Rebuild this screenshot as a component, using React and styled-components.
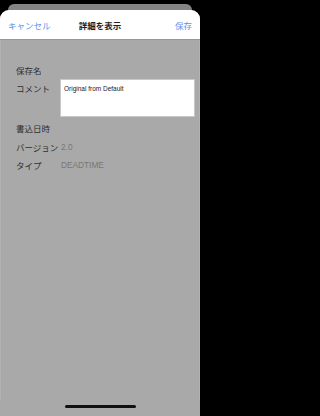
import React from "react";
import styled, { createGlobalStyle } from "styled-components";

const GlobalStyle = createGlobalStyle`
  * {
    box-sizing: border-box;
    margin: 0;
    padding: 0;
  }
  body {
    background: #000;
    font-family: "Noto Sans CJK JP", "Noto Sans", sans-serif;
  }
`;

const Page = styled.div`
  display: flex;
  flex-direction: column;
  width: 200px;
  height: 416px;
  background: #000;
`;

const BackCard = styled.div`
  margin: 4px 8px 0;
  height: 6px;
  background: #858585;
  border-radius: 8px 8px 0 0;
`;

const Sheet = styled.div`
  flex: 1;
  display: flex;
  flex-direction: column;
  border-radius: 9px 9px 0 0;
  overflow: hidden;
  background: #a9a9a9;
`;

const Header = styled.div`
  height: 30px;
  display: grid;
  grid-template-columns: 1fr auto 1fr;
  align-items: center;
  padding: 0 8px;
  background: #fff;
  border-bottom: 1px solid #979797;
`;

const NavButton = styled.span`
  font-size: 8.5px;
  color: #5b93ee;
  justify-self: ${(p) => (p.right ? "end" : "start")};
`;

const Title = styled.span`
  font-size: 8.5px;
  font-weight: 600;
  color: #1e1e1e;
`;

const Content = styled.div`
  flex: 1;
  padding: 21px 4px 0 15px;
  border-left: 1px solid #b3b3b3;
  border-right: 1px solid #b3b3b3;
  display: flex;
  flex-direction: column;
`;

const Row = styled.div`
  display: flex;
  align-items: flex-start;
  height: ${(p) => p.h || 18.5}px;
  margin-bottom: ${(p) => p.gap || 0}px;
`;

const Label = styled.div`
  width: 44px;
  flex-shrink: 0;
  font-size: 8.5px;
  line-height: 18px;
  color: #2f2f2f;
  white-space: nowrap;
`;

const Value = styled.div`
  font-family: "Liberation Sans", Arial, sans-serif;
  font-size: 8.3px;
  line-height: 18px;
  color: #777;
  padding-left: 1px;
`;

const Comment = styled.div`
  width: 135px;
  height: 38px;
  background: #fff;
  border: 1px solid #c8c8c8;
  padding: 5px 3px;
  font-family: "Liberation Sans", Arial, sans-serif;
  font-size: 6.5px;
  line-height: 8px;
  color: #222;
`;

const Footer = styled.div`
  height: 16px;
  display: flex;
  justify-content: center;
  align-items: flex-start;
  padding-top: 5px;
`;

const HomeBar = styled.div`
  width: 71px;
  height: 2.5px;
  border-radius: 2px;
  background: #111;
`;

export default function App() {
  return (
    <Page>
      <GlobalStyle />
      <BackCard />
      <Sheet>
        <Header>
          <NavButton>キャンセル</NavButton>
          <Title>詳細を表示</Title>
          <NavButton right>保存</NavButton>
        </Header>
        <Content>
          <Row h={18}>
            <Label>保存名</Label>
          </Row>
          <Row h={38} gap={2}>
            <Label>コメント</Label>
            <Comment>Original from Default</Comment>
          </Row>
          <Row>
            <Label>書込日時</Label>
          </Row>
          <Row>
            <Label>バージョン</Label>
            <Value>2.0</Value>
          </Row>
          <Row>
            <Label>タイプ</Label>
            <Value>DEADTIME</Value>
          </Row>
        </Content>
        <Footer>
          <HomeBar />
        </Footer>
      </Sheet>
    </Page>
  );
}
